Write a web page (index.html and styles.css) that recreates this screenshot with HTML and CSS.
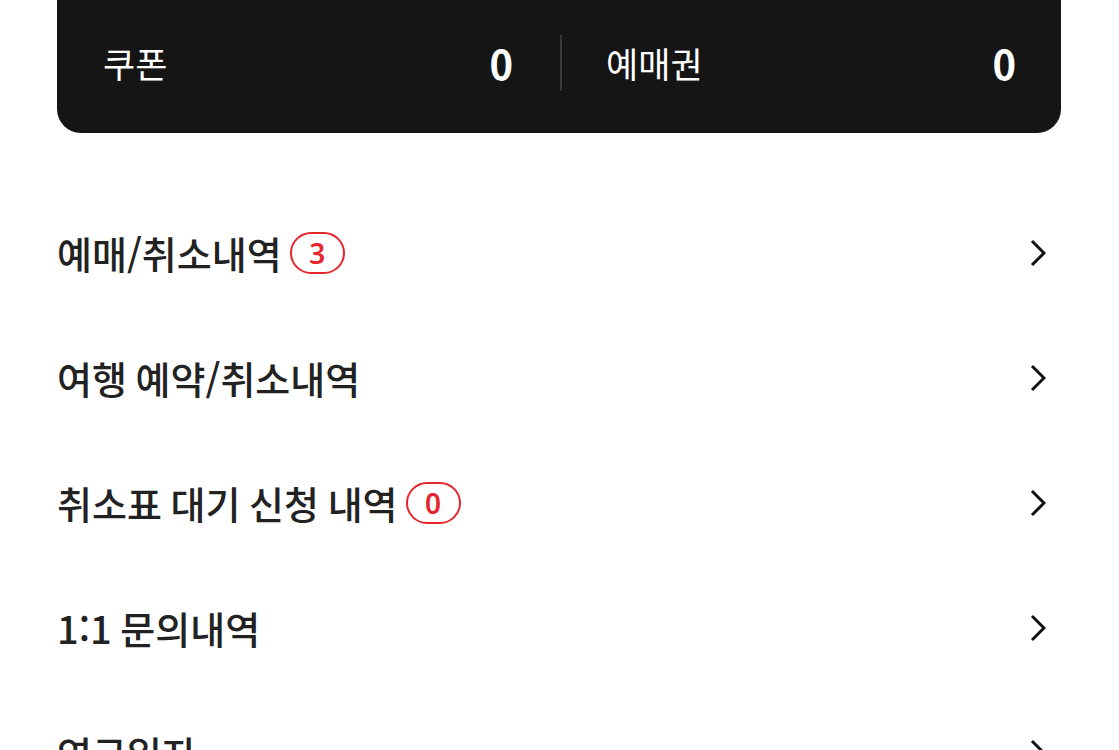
FILE: index.html
```html
<!DOCTYPE html>
<html lang="ko">
<head>
    <meta charset="UTF-8">
    <meta name="viewport" content="width=device-width, initial-scale=1.0">
    <title>마이페이지</title>
    <link rel="stylesheet" href="styles.css">
</head>
<body>
    <div class="page">
        <!-- Coupon / ticket summary -->
        <div class="summary">
            <div class="summary-item">
                <span class="summary-label">쿠폰</span>
                <span class="summary-value">0</span>
            </div>
            <div class="summary-divider"></div>
            <div class="summary-item">
                <span class="summary-label">예매권</span>
                <span class="summary-value">0</span>
            </div>
        </div>

        <!-- Menu -->
        <ul class="menu">
            <li class="menu-item">
                <span class="menu-title">예매/취소내역<span class="badge">3</span></span>
                <svg class="chevron" viewBox="0 0 16 28"><path d="M2 2 L14 14 L2 26"/></svg>
            </li>
            <li class="menu-item">
                <span class="menu-title">여행 예약/취소내역</span>
                <svg class="chevron" viewBox="0 0 16 28"><path d="M2 2 L14 14 L2 26"/></svg>
            </li>
            <li class="menu-item">
                <span class="menu-title">취소표 대기 신청 내역<span class="badge">0</span></span>
                <svg class="chevron" viewBox="0 0 16 28"><path d="M2 2 L14 14 L2 26"/></svg>
            </li>
            <li class="menu-item">
                <span class="menu-title">1:1 문의내역</span>
                <svg class="chevron" viewBox="0 0 16 28"><path d="M2 2 L14 14 L2 26"/></svg>
            </li>
            <li class="menu-item">
                <span class="menu-title">연구일자</span>
                <svg class="chevron" viewBox="0 0 16 28"><path d="M2 2 L14 14 L2 26"/></svg>
            </li>
        </ul>
    </div>
</body>
</html>
```

FILE: styles.css
```css
html, body {
    margin: 0;
    padding: 0;
    background-color: #ffffff;
    overflow: hidden;
}

body {
    font-family: "Noto Sans CJK KR", "Noto Sans", sans-serif;
    color: #222222;
}

.page {
    padding: 0 58px 0 57px;
}

/* Summary card */
.summary {
    display: flex;
    align-items: center;
    height: 133px;
    box-sizing: border-box;
    padding: 0 45px 8px 46px;
    background-color: #151515;
    border-radius: 0 0 24px 24px;
}

.summary-item {
    flex: 1;
    display: flex;
    justify-content: space-between;
    align-items: center;
}

.summary-label {
    font-size: 35px;
    font-weight: 400;
    color: #ffffff;
}

.summary-value {
    font-size: 40px;
    font-weight: 700;
    color: #ffffff;
}

.summary-divider {
    width: 2px;
    height: 56px;
    margin: 0 44px 0 47px;
    background-color: #383838;
}

/* Menu */
.menu {
    list-style: none;
    margin: 57px 0 0;
    padding: 0;
}

.menu-item {
    display: flex;
    justify-content: space-between;
    align-items: center;
    height: 125px;
    padding-right: 15px;
}

.menu-title {
    display: flex;
    align-items: center;
    font-size: 38px;
    font-weight: 500;
    word-spacing: -2px;
    color: #222222;
}

.badge {
    display: inline-flex;
    justify-content: center;
    align-items: center;
    width: 55px;
    height: 42px;
    box-sizing: border-box;
    margin-left: 8px;
    border: 2px solid #e5262c;
    border-radius: 21px;
    font-family: "Noto Sans", sans-serif;
    font-size: 28px;
    font-weight: 600;
    color: #e5262c;
}

.chevron {
    width: 16px;
    height: 28px;
    fill: none;
    stroke: #111111;
    stroke-width: 3;
}
```
